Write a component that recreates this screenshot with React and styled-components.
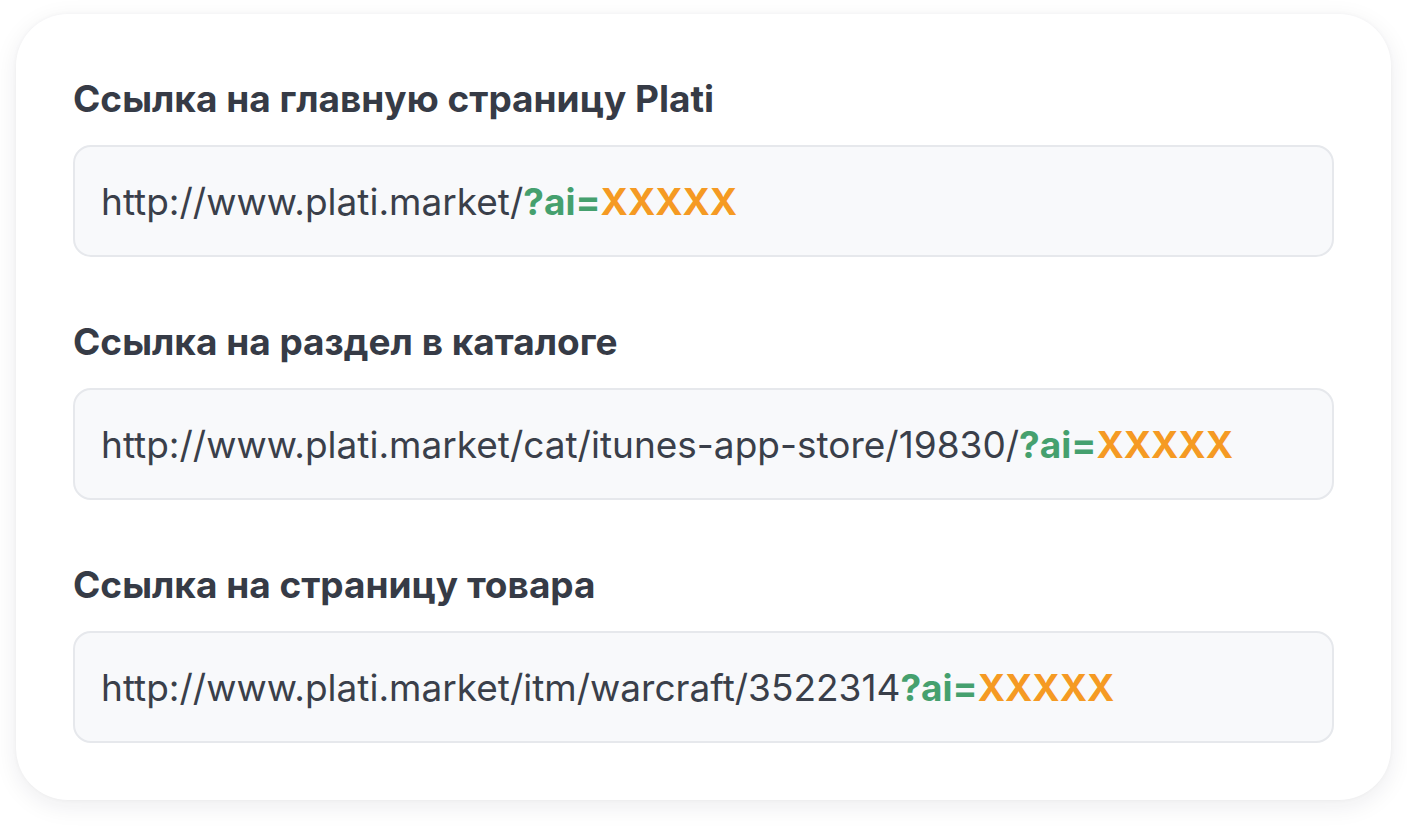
import React from 'react';
import styled, { createGlobalStyle } from 'styled-components';

const Global = createGlobalStyle`
  body {
    margin: 0;
    background: #ffffff;
    font-family: Inter, "Noto Sans", sans-serif;
  }
`;

const Page = styled.div`
  padding: 14px 16px 28px 16px;
`;

const Card = styled.div`
  width: 1375px;
  height: 786px;
  box-sizing: border-box;
  background: #ffffff;
  border-radius: 52px;
  box-shadow: 0 6px 24px rgba(20, 30, 50, 0.08), 0 0 4px rgba(20, 30, 50, 0.04);
  padding: 63px 57px 0 57px;
  display: flex;
  flex-direction: column;
  gap: 63px;
`;

const Section = styled.div`
  display: flex;
  flex-direction: column;
  gap: 24px;
`;

const Title = styled.h2`
  margin: 0;
  font-size: 37px;
  line-height: 44px;
  font-weight: 700;
  color: #363b46;
`;

const LinkBox = styled.div`
  height: 112px;
  box-sizing: border-box;
  background: #f8f9fb;
  border: 2px solid #e6e8ec;
  border-radius: 18px;
  padding: 0 26px;
  display: flex;
  align-items: center;
  font-size: 37px;
  color: #3a3f4a;
  white-space: nowrap;
`;

const Param = styled.span`
  font-weight: 700;
  color: ${(p) => p.color};
`;

const links = [
  { id: 1, title: 'Ссылка на главную страницу Plati', url: 'http://www.plati.market/' },
  { id: 2, title: 'Ссылка на раздел в каталоге', url: 'http://www.plati.market/cat/itunes-app-store/19830/' },
  { id: 3, title: 'Ссылка на страницу товара', url: 'http://www.plati.market/itm/warcraft/3522314' },
];

export default function App() {
  return (
    <Page>
      <Global />
      <Card>
        {links.map((item) => (
          <Section key={item.id}>
            <Title>{item.title}</Title>
            <LinkBox>
              {item.url}
              <Param color="#45a06e">?ai=</Param>
              <Param color="#f59a23">XXXXX</Param>
            </LinkBox>
          </Section>
        ))}
      </Card>
    </Page>
  );
}
